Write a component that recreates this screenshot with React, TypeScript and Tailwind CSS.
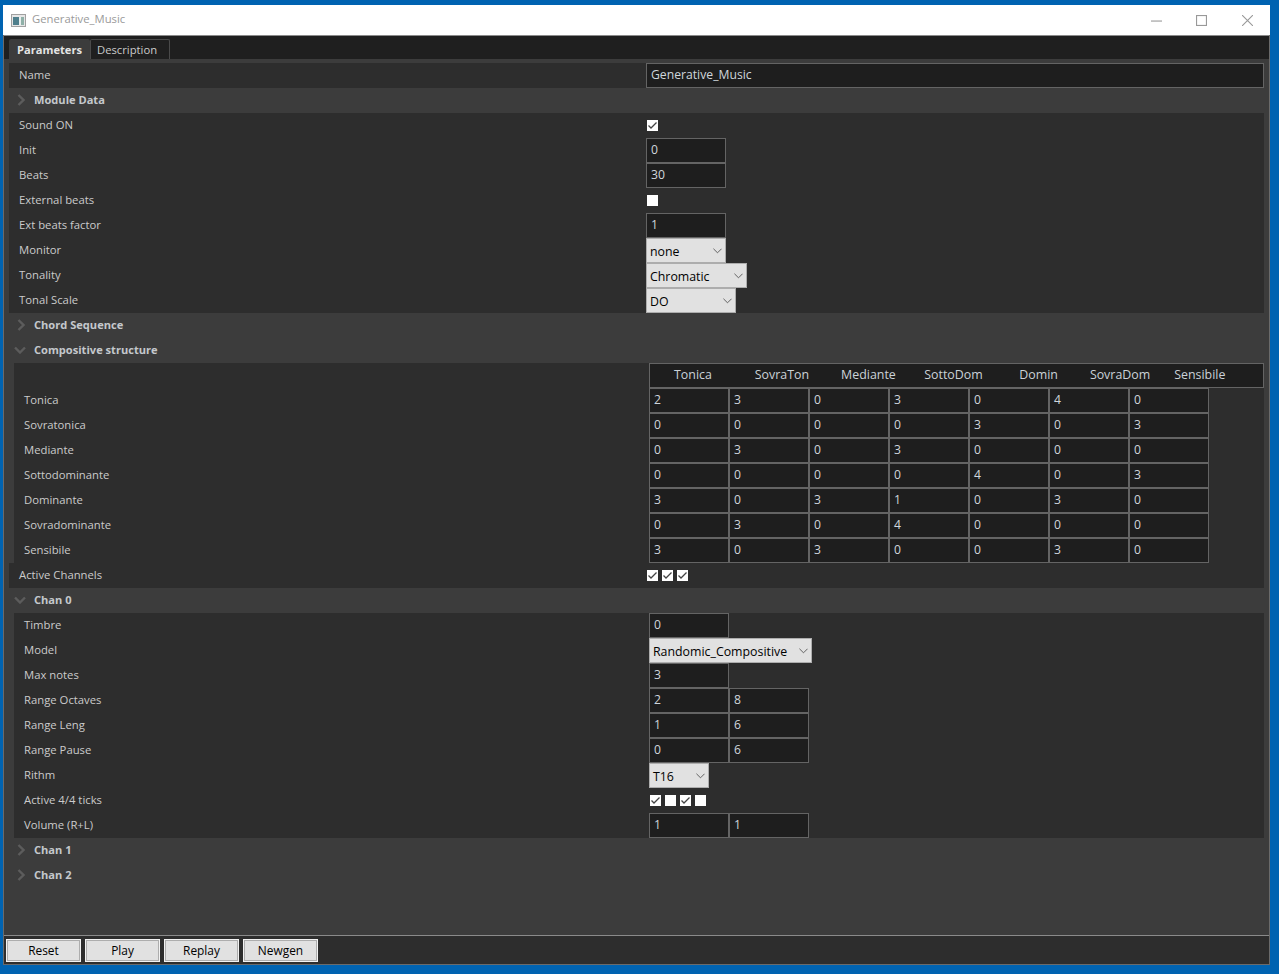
const font = { fontFamily: '"Open Sans", "Noto Sans", sans-serif' };

function Check({ on }: { on: boolean }) {
  return (
    <span className="w-[11px] h-[11px] bg-white block shrink-0">
      {on && (
        <svg viewBox="0 0 11 11" className="w-[11px] h-[11px]">
          <path d="M1.5 5.5 L4 8 L9.5 2.5" fill="none" stroke="#444" strokeWidth="1.3" />
        </svg>
      )}
    </span>
  );
}

function Checks({ values }: { values: boolean[] }) {
  return (
    <div className="flex gap-1 pl-[1px]">
      {values.map((v, i) => (
        <Check key={i} on={v} />
      ))}
    </div>
  );
}

function Input({ value, w = "w-20" }: { value: string; w?: string }) {
  return (
    <div className={`${w} h-[25px] border border-[#646464] bg-[#1e1e1e] pl-1 text-[#cfd6dc] text-[12.2px] leading-[21px] shrink-0`}>
      {value}
    </div>
  );
}

function Select({ value, w }: { value: string; w: string }) {
  return (
    <div className={`${w} h-[25px] border border-[#adadad] bg-[#e1e1e1] pl-[3px] pr-[3px] text-black text-[12.35px] flex items-center justify-between shrink-0`}>
      <span className="pt-[3px]">{value}</span>
      <svg viewBox="0 0 10 6" className="w-[9px] h-[6px]">
        <path d="M0.5 0.5 L5 5 L9.5 0.5" fill="none" stroke="#555" strokeWidth="1" />
      </svg>
    </div>
  );
}

function Row({ label, nested = false, children }: { label: string; nested?: boolean; children?: React.ReactNode }) {
  return (
    <div className="flex items-center h-[25px] bg-[#2d2d2d]">
      <div className={`${nested ? "w-[635px]" : "w-[637px]"} pl-[10px] pb-[1px] text-[#cbcbcb] text-[11.3px] shrink-0`}>{label}</div>
      {children}
    </div>
  );
}

function Section({ label, open = false }: { label: string; open?: boolean }) {
  return (
    <div className="flex items-center h-[25px] bg-[#3c3c3c]">
      <div className="w-[25px] flex justify-center shrink-0 pb-[1px]">
        {open ? (
          <svg viewBox="0 0 12 8" className="w-[12px] h-[8px] -ml-[3px]">
            <path d="M1 1.5 L6 6.5 L11 1.5" fill="none" stroke="#5c5c5c" strokeWidth="2.4" />
          </svg>
        ) : (
          <svg viewBox="0 0 8 12" className="w-[8px] h-[12px] -ml-[1px]">
            <path d="M1.5 1 L6.5 6 L1.5 11" fill="none" stroke="#5c5c5c" strokeWidth="2.4" />
          </svg>
        )}
      </div>
      <span className="text-[#c4c8cc] text-[11.1px] font-bold">{label}</span>
    </div>
  );
}

const headers: [string, string][] = [
  ["Tonica", "ml-[24px]"],
  ["SovraTon", "ml-[43px]"],
  ["Mediante", "ml-[32px]"],
  ["SottoDom", "ml-[28.5px]"],
  ["Domin", "ml-[36.5px]"],
  ["SovraDom", "ml-[32px]"],
  ["Sensibile", "ml-[24px]"],
];

const matrix: [string, string[]][] = [
  ["Tonica", ["2", "3", "0", "3", "0", "4", "0"]],
  ["Sovratonica", ["0", "0", "0", "0", "3", "0", "3"]],
  ["Mediante", ["0", "3", "0", "3", "0", "0", "0"]],
  ["Sottodominante", ["0", "0", "0", "0", "4", "0", "3"]],
  ["Dominante", ["3", "0", "3", "1", "0", "3", "0"]],
  ["Sovradominante", ["0", "3", "0", "4", "0", "0", "0"]],
  ["Sensibile", ["3", "0", "3", "0", "0", "3", "0"]],
];

export default function App() {
  return (
    <div className="w-[1279px] h-[974px] bg-[#0063b1] pt-[5px] pl-[3px] overflow-hidden" style={font}>
      <div className="w-[1267px] h-[960px] flex flex-col bg-[#3c3c3c] border-l border-r border-b border-[#6a6a6a]">
        <div className="h-[30px] bg-white flex items-center shrink-0 -ml-[1px] -mr-[1px]">
          <svg viewBox="0 0 15 13" className="w-[15px] h-[13px] ml-[8px]">
            <rect x="0.5" y="0.5" width="14" height="12" fill="#e6e6e6" stroke="#a0a0a0" />
            <rect x="2" y="3" width="6" height="8" fill="#4f7f8c" />
            <rect x="8" y="3" width="2" height="8" fill="#e8eeee" />
            <rect x="10" y="3" width="3" height="8" fill="#8fb0a8" />
          </svg>
          <span className="ml-[6px] pb-[2px] text-[11.3px] text-[#9a9a9a]">Generative_Music</span>
          <div className="ml-auto flex items-center">
            <svg viewBox="0 0 10 10" className="w-[11px] h-[11px]">
              <path d="M0 5.5 H10" stroke="#999" strokeWidth="1" />
            </svg>
            <svg viewBox="0 0 10 10" className="w-[11px] h-[11px] ml-[34px]">
              <rect x="0.5" y="0.5" width="9" height="9" fill="none" stroke="#999" strokeWidth="1" />
            </svg>
            <svg viewBox="0 0 10 10" className="w-[11px] h-[11px] ml-[35px] mr-[17px]">
              <path d="M0 0 L10 10 M10 0 L0 10" stroke="#999" strokeWidth="1" />
            </svg>
          </div>
        </div>
        <div className="h-px bg-[#8a8a8a] shrink-0" />
        <div className="h-[23px] bg-[#1f1f1f] flex items-end pl-[5px] shrink-0">
          <div className="w-[81px] h-[20px] bg-[#3c3c3c] rounded-t-[2px] pl-[8px] text-[11.15px] leading-[21px] font-bold text-[#e4e4e4]">Parameters</div>
          <div className="w-[80px] h-[20px] bg-[#1f1f1f] border-t border-l border-r border-[#4a4a4a] rounded-t-[2px] pl-[6px] text-[11.25px] leading-[19px] text-[#cbcbcb]">Description</div>
        </div>
        <div className="flex-1 pt-[4px] pl-[5px] pr-[5px]">
          <Row label="Name">
            <Input value="Generative_Music" w="w-[618px]" />
          </Row>
          <Section label="Module Data" />
          <Row label="Sound ON"><Checks values={[true]} /></Row>
          <Row label="Init"><Input value="0" /></Row>
          <Row label="Beats"><Input value="30" /></Row>
          <Row label="External beats"><Checks values={[false]} /></Row>
          <Row label="Ext beats factor"><Input value="1" /></Row>
          <Row label="Monitor"><Select value="none" w="w-20" /></Row>
          <Row label="Tonality"><Select value="Chromatic" w="w-[101px]" /></Row>
          <Row label="Tonal Scale"><Select value="DO" w="w-[90px]" /></Row>
          <Section label="Chord Sequence" />
          <Section label="Compositive structure" open />
          <div className="pl-[5px]">
            <Row label="" nested>
              <div className="flex-1 h-[25px] border border-[#646464] bg-[#1e1e1e] flex items-center text-[12.4px] text-[#cbd2d8]">
                {headers.map(([h, m]) => (
                  <span key={h} className={m}>{h}</span>
                ))}
              </div>
            </Row>
            {matrix.map(([label, vals]) => (
              <Row key={label} label={label} nested>
                {vals.map((v, i) => (
                  <Input key={i} value={v} />
                ))}
              </Row>
            ))}
          </div>
          <Row label="Active Channels"><Checks values={[true, true, true]} /></Row>
          <Section label="Chan 0" open />
          <div className="pl-[5px]">
            <Row label="Timbre" nested><Input value="0" /></Row>
            <Row label="Model" nested><Select value="Randomic_Compositive" w="w-[163px]" /></Row>
            <Row label="Max notes" nested><Input value="3" /></Row>
            <Row label="Range Octaves" nested><Input value="2" /><Input value="8" /></Row>
            <Row label="Range Leng" nested><Input value="1" /><Input value="6" /></Row>
            <Row label="Range Pause" nested><Input value="0" /><Input value="6" /></Row>
            <Row label="Rithm" nested><Select value="T16" w="w-[60px]" /></Row>
            <Row label="Active 4/4 ticks" nested><Checks values={[true, false, true, false]} /></Row>
            <Row label="Volume (R+L)" nested><Input value="1" /><Input value="1" /></Row>
          </div>
          <Section label="Chan 1" />
          <Section label="Chan 2" />
        </div>
        <div className="h-px bg-[#8a8a8a] shrink-0" />
        <div className="h-[28px] bg-[#2d2d2d] flex items-center gap-1 pl-[2px] shrink-0">
          {["Reset", "Play", "Replay", "Newgen"].map((b) => (
            <div key={b} className="w-[75px] h-[23px] bg-[#e1e1e1] border border-[#f2f2f2] shadow-[inset_0_0_0_1px_#adadad] text-center text-[11.9px] leading-[20px] text-black">
              {b}
            </div>
          ))}
        </div>
      </div>
    </div>
  );
}
